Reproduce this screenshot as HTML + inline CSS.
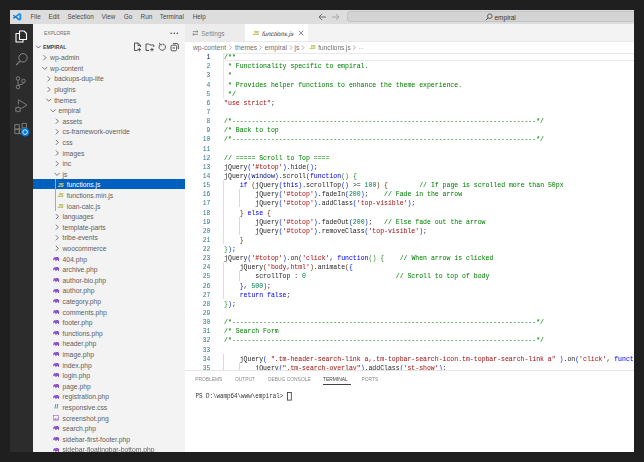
<!DOCTYPE html>
<html><head><meta charset="utf-8"><style>
html,body{margin:0;padding:0;width:644px;height:462px;overflow:hidden;background:#1f1f1f}
.r{position:absolute}
.t{position:absolute;white-space:nowrap}
.m{-webkit-text-stroke:0.03px currentColor}
svg.r{overflow:visible}
</style></head><body>
<div style="position:absolute;left:0;top:0;width:644px;height:462px;clip-path:inset(10px 10px 10px 10px);filter:blur(0.25px)"><div class="r" style="left:10.00px;top:10.00px;width:624.00px;height:442.00px;background:#ffffff;"></div>
<div class="r" style="left:10.00px;top:10.00px;width:624.00px;height:13.80px;background:#dddddd;"></div>
<svg class="r" style="left:13.4px;top:12.7px" width="8.4" height="7.6" viewBox="0 0 100 100" preserveAspectRatio="none">
<defs><linearGradient id="lg" x1="0" x2="1" y1="0" y2="0"><stop offset="0" stop-color="#0a6fc0"/><stop offset="1" stop-color="#2a9cf0"/></linearGradient></defs>
<path fill-rule="evenodd" fill="url(#lg)" d="M96.46 10.8 L75.86 0.87 C73.48 -0.28 70.62 0.2 68.75 2.07 L29.29 38.04 L12.11 25 C10.51 23.79 8.27 23.89 6.78 25.24 L1.27 30.25 C-0.54 31.9 -0.54 34.75 1.27 36.4 L16.17 50 L1.27 63.6 C-0.54 65.25 -0.54 68.1 1.27 69.75 L6.78 74.76 C8.27 76.11 10.51 76.21 12.11 75 L29.29 61.96 L68.75 97.93 C70.62 99.8 73.48 100.28 75.86 99.13 L96.46 89.2 C98.62 88.16 100 85.97 100 83.57 V16.43 C100 14.03 98.62 11.84 96.46 10.8 Z M75.02 27.3 L45.08 50 L75.02 72.7 Z"/>
</svg>
<div class="t" style="left:30.40px;top:12.92px;height:8.96px;line-height:8.96px;font-size:6.4px;font-family:'Liberation Sans', sans-serif;color:#4a4a4a;">File</div>
<div class="t" style="left:48.40px;top:12.92px;height:8.96px;line-height:8.96px;font-size:6.4px;font-family:'Liberation Sans', sans-serif;color:#4a4a4a;">Edit</div>
<div class="t" style="left:67.50px;top:12.92px;height:8.96px;line-height:8.96px;font-size:6.4px;font-family:'Liberation Sans', sans-serif;color:#4a4a4a;">Selection</div>
<div class="t" style="left:101.60px;top:12.92px;height:8.96px;line-height:8.96px;font-size:6.4px;font-family:'Liberation Sans', sans-serif;color:#4a4a4a;">View</div>
<div class="t" style="left:123.70px;top:12.92px;height:8.96px;line-height:8.96px;font-size:6.4px;font-family:'Liberation Sans', sans-serif;color:#4a4a4a;">Go</div>
<div class="t" style="left:140.60px;top:12.92px;height:8.96px;line-height:8.96px;font-size:6.4px;font-family:'Liberation Sans', sans-serif;color:#4a4a4a;">Run</div>
<div class="t" style="left:159.70px;top:12.92px;height:8.96px;line-height:8.96px;font-size:6.4px;font-family:'Liberation Sans', sans-serif;color:#4a4a4a;">Terminal</div>
<div class="t" style="left:192.70px;top:12.92px;height:8.96px;line-height:8.96px;font-size:6.4px;font-family:'Liberation Sans', sans-serif;color:#4a4a4a;">Help</div>
<svg class="r" style="left:318px;top:12.5px" width="22" height="8" viewBox="0 0 22 8">
<path d="M1 4 H8 M1 4 L4 1 M1 4 L4 7" stroke="#555" stroke-width="0.8" fill="none"/>
<path d="M14 4 H21 M21 4 L18 1 M21 4 L18 7" stroke="#9a9a9a" stroke-width="0.8" fill="none"/>
</svg>
<div class="r" style="left:346.70px;top:11.30px;width:300.00px;height:10.60px;background:#d3d3d3;border:0.6px solid #c4c4c4;border-radius:3px;box-sizing:border-box"></div>
<svg class="r" style="left:484.5px;top:13px" width="8" height="8" viewBox="0 0 8 8">
<circle cx="4.8" cy="3.2" r="2.3" stroke="#444" stroke-width="0.8" fill="none"/><path d="M3.2 4.8 L0.8 7.2" stroke="#444" stroke-width="0.9"/>
</svg>
<div class="t" style="left:494.50px;top:12.65px;height:9.10px;line-height:9.10px;font-size:6.5px;font-family:'Liberation Sans', sans-serif;color:#333;">empiral</div>
<div class="r" style="left:10.00px;top:23.80px;width:23.20px;height:428.20px;background:#2c2c2c;"></div>
<svg class="r" style="left:14px;top:29.5px" width="14" height="13" viewBox="0 0 14 13">
<path d="M5.5 1 H10 L12.5 3.5 V9.5 H5.5 Z" stroke="#fff" stroke-width="1.1" fill="none" stroke-linejoin="round"/>
<path d="M5.5 3.5 H2 V12 H9 V9.5" stroke="#fff" stroke-width="1.1" fill="none" stroke-linejoin="round"/>
</svg>
<svg class="r" style="left:14.5px;top:52px" width="13" height="14" viewBox="0 0 13 14">
<circle cx="8" cy="5.8" r="4.2" stroke="#858585" stroke-width="1" fill="none"/>
<path d="M5.2 8.8 L1.2 13" stroke="#858585" stroke-width="1.1"/>
</svg>
<svg class="r" style="left:14px;top:75px" width="13" height="15" viewBox="0 0 13 15">
<circle cx="4" cy="3.5" r="1.8" stroke="#858585" stroke-width="0.9" fill="none"/>
<circle cx="4" cy="12" r="1.8" stroke="#858585" stroke-width="0.9" fill="none"/>
<circle cx="9.5" cy="6" r="1.8" stroke="#858585" stroke-width="0.9" fill="none"/>
<path d="M4 5.3 V10.2 M9.5 7.8 C9.5 10 5 9 4 10.5" stroke="#858585" stroke-width="0.9" fill="none"/>
</svg>
<svg class="r" style="left:14.3px;top:99px" width="14" height="14" viewBox="0 0 14 14">
<path d="M4.4 0.8 L13 6 L7.2 9.6" stroke="#858585" stroke-width="0.9" fill="none" stroke-linejoin="round"/>
<path d="M4.4 0.8 V5.5" stroke="#858585" stroke-width="0.9"/>
<circle cx="4" cy="10.5" r="2.3" stroke="#858585" stroke-width="0.9" fill="none"/>
<path d="M1 8.6 L2.1 9.3 M1 12.4 L2.1 11.7 M7 8.6 L5.9 9.3 M7 12.4 L5.9 11.7 M4 8.2 V7.2" stroke="#858585" stroke-width="0.7"/>
</svg>
<svg class="r" style="left:14px;top:122px" width="17" height="16" viewBox="0 0 17 16">
<path d="M0.8 2.6 H5.3 V7.1 H0.8 Z M0.8 7.1 H5.3 V11.6 H0.8 Z M5.3 7.1 H9.8 V11.6 H5.3 Z M8.1 1.4 H12.5 V5.8 H8.1 Z" stroke="#858585" stroke-width="0.9" fill="none"/>
<circle cx="11.1" cy="10.1" r="4.3" fill="#0078d4"/>
<circle cx="11.1" cy="10.1" r="2.3" stroke="#fff" stroke-width="0.8" fill="none"/>
<path d="M11.1 8.9 V10.2 L12.1 10.9" stroke="#0078d4" stroke-width="0.7" fill="none"/>
</svg>
<div class="r" style="left:33.20px;top:23.80px;width:151.80px;height:428.20px;background:#f3f3f3;"></div>
<div class="t" style="left:43.50px;top:29.78px;height:7.84px;line-height:7.84px;font-size:5.6px;font-family:'Liberation Sans', sans-serif;color:#6f6f6f;transform:scaleX(0.86);transform-origin:0 50%">EXPLORER</div>
<svg class="r" style="left:170px;top:32px" width="9" height="3" viewBox="0 0 9 3"><g fill="#424242"><circle cx="1.2" cy="1.3" r="0.75"/><circle cx="4.3" cy="1.3" r="0.75"/><circle cx="7.4" cy="1.3" r="0.75"/></g></svg>
<svg class="r" style="left:0;top:0" width="644" height="462"><path d="M36.10 45.75 L38.40 48.05 L40.70 45.75" stroke="#555" stroke-width="0.8" fill="none"/></svg>
<div class="t" style="left:43.40px;top:42.54px;height:8.12px;line-height:8.12px;font-size:5.8px;font-family:'Liberation Sans', sans-serif;color:#444;font-weight:bold;transform:scaleX(0.9);transform-origin:0 50%">EMPIRAL</div>
<svg class="r" style="left:132px;top:41.5px" width="50" height="10" viewBox="0 0 50 10">
<g stroke="#424242" stroke-width="0.9" fill="none">
<path d="M5.5 8.5 H2.5 V1 H6.3 L8.6 3.3 V5"/><path d="M6 1.2 V3.6 H8.4"/>
<path d="M7.3 5.8 V9.4 M5.5 7.6 H9.1"/>
<path d="M17.2 8.5 H14 V2 H16.8 L17.8 3 H21.8 V5"/>
<path d="M20 5.8 V9.4 M18.2 7.6 H21.8"/>
<path d="M28.2 2.6 A3.2 3.2 0 1 0 30.8 1.9"/><path d="M27.4 0.8 L28.2 2.8 L30.3 2.7"/>
<rect x="39" y="3.2" width="5.6" height="5.6" rx="1.3"/><path d="M41 1.6 H44.8 A1.6 1.6 0 0 1 46.4 3.2 V7"/><path d="M40.6 6 H43"/>
</g>
</svg>
<div class="r" style="left:33.20px;top:179.00px;width:151.80px;height:10.30px;background:#0060c0;"></div>
<div class="r" style="left:55.20px;top:179.10px;width:0.60px;height:31.80px;background:#a9a9a9;"></div>
<svg class="r" style="left:0;top:0" width="644" height="462"><path d="M43.45 55.10 L45.95 57.60 L43.45 60.10" stroke="#616161" stroke-width="0.85" fill="none"/></svg>
<div class="t" style="left:50.10px;top:53.27px;height:9.45px;line-height:9.45px;font-size:6.75px;font-family:'Liberation Sans', sans-serif;color:#616161;">wp-admin</div>
<svg class="r" style="left:0;top:0" width="644" height="462"><path d="M42.20 66.95 L44.70 69.45 L47.20 66.95" stroke="#616161" stroke-width="0.85" fill="none"/></svg>
<div class="t" style="left:50.10px;top:63.87px;height:9.45px;line-height:9.45px;font-size:6.75px;font-family:'Liberation Sans', sans-serif;color:#616161;">wp-content</div>
<svg class="r" style="left:0;top:0" width="644" height="462"><path d="M47.55 76.30 L50.05 78.80 L47.55 81.30" stroke="#616161" stroke-width="0.85" fill="none"/></svg>
<div class="t" style="left:54.20px;top:74.47px;height:9.45px;line-height:9.45px;font-size:6.75px;font-family:'Liberation Sans', sans-serif;color:#616161;">backups-dup-lite</div>
<svg class="r" style="left:0;top:0" width="644" height="462"><path d="M47.55 86.90 L50.05 89.40 L47.55 91.90" stroke="#616161" stroke-width="0.85" fill="none"/></svg>
<div class="t" style="left:54.20px;top:85.07px;height:9.45px;line-height:9.45px;font-size:6.75px;font-family:'Liberation Sans', sans-serif;color:#616161;">plugins</div>
<svg class="r" style="left:0;top:0" width="644" height="462"><path d="M46.30 98.75 L48.80 101.25 L51.30 98.75" stroke="#616161" stroke-width="0.85" fill="none"/></svg>
<div class="t" style="left:54.20px;top:95.67px;height:9.45px;line-height:9.45px;font-size:6.75px;font-family:'Liberation Sans', sans-serif;color:#616161;">themes</div>
<svg class="r" style="left:0;top:0" width="644" height="462"><path d="M50.50 109.35 L53.00 111.85 L55.50 109.35" stroke="#616161" stroke-width="0.85" fill="none"/></svg>
<div class="t" style="left:58.40px;top:106.27px;height:9.45px;line-height:9.45px;font-size:6.75px;font-family:'Liberation Sans', sans-serif;color:#616161;">empiral</div>
<svg class="r" style="left:0;top:0" width="644" height="462"><path d="M55.85 118.70 L58.35 121.20 L55.85 123.70" stroke="#616161" stroke-width="0.85" fill="none"/></svg>
<div class="t" style="left:62.50px;top:116.88px;height:9.45px;line-height:9.45px;font-size:6.75px;font-family:'Liberation Sans', sans-serif;color:#616161;">assets</div>
<svg class="r" style="left:0;top:0" width="644" height="462"><path d="M55.85 129.30 L58.35 131.80 L55.85 134.30" stroke="#616161" stroke-width="0.85" fill="none"/></svg>
<div class="t" style="left:62.50px;top:127.48px;height:9.45px;line-height:9.45px;font-size:6.75px;font-family:'Liberation Sans', sans-serif;color:#616161;">cs-framework-override</div>
<svg class="r" style="left:0;top:0" width="644" height="462"><path d="M55.85 139.90 L58.35 142.40 L55.85 144.90" stroke="#616161" stroke-width="0.85" fill="none"/></svg>
<div class="t" style="left:62.50px;top:138.08px;height:9.45px;line-height:9.45px;font-size:6.75px;font-family:'Liberation Sans', sans-serif;color:#616161;">css</div>
<svg class="r" style="left:0;top:0" width="644" height="462"><path d="M55.85 150.50 L58.35 153.00 L55.85 155.50" stroke="#616161" stroke-width="0.85" fill="none"/></svg>
<div class="t" style="left:62.50px;top:148.68px;height:9.45px;line-height:9.45px;font-size:6.75px;font-family:'Liberation Sans', sans-serif;color:#616161;">images</div>
<svg class="r" style="left:0;top:0" width="644" height="462"><path d="M55.85 161.10 L58.35 163.60 L55.85 166.10" stroke="#616161" stroke-width="0.85" fill="none"/></svg>
<div class="t" style="left:62.50px;top:159.28px;height:9.45px;line-height:9.45px;font-size:6.75px;font-family:'Liberation Sans', sans-serif;color:#616161;">inc</div>
<svg class="r" style="left:0;top:0" width="644" height="462"><path d="M54.60 172.95 L57.10 175.45 L59.60 172.95" stroke="#616161" stroke-width="0.85" fill="none"/></svg>
<div class="t" style="left:62.50px;top:169.88px;height:9.45px;line-height:9.45px;font-size:6.75px;font-family:'Liberation Sans', sans-serif;color:#616161;">js</div>
<div class="t" style="left:57.40px;top:181.62px;height:7.56px;line-height:7.56px;font-size:5.4px;font-family:'Liberation Sans', sans-serif;color:#dede55;font-weight:bold;font-style:italic;letter-spacing:-0.4px">JS</div>
<div class="t" style="left:66.70px;top:180.47px;height:9.45px;line-height:9.45px;font-size:6.75px;font-family:'Liberation Sans', sans-serif;color:#ffffff;">functions.js</div>
<div class="t" style="left:57.40px;top:192.22px;height:7.56px;line-height:7.56px;font-size:5.4px;font-family:'Liberation Sans', sans-serif;color:#b3b33a;font-weight:bold;font-style:italic;letter-spacing:-0.4px">JS</div>
<div class="t" style="left:66.70px;top:191.08px;height:9.45px;line-height:9.45px;font-size:6.75px;font-family:'Liberation Sans', sans-serif;color:#616161;">functions.min.js</div>
<div class="t" style="left:57.40px;top:202.82px;height:7.56px;line-height:7.56px;font-size:5.4px;font-family:'Liberation Sans', sans-serif;color:#b3b33a;font-weight:bold;font-style:italic;letter-spacing:-0.4px">JS</div>
<div class="t" style="left:66.70px;top:201.68px;height:9.45px;line-height:9.45px;font-size:6.75px;font-family:'Liberation Sans', sans-serif;color:#616161;">loan-calc.js</div>
<svg class="r" style="left:0;top:0" width="644" height="462"><path d="M55.85 214.10 L58.35 216.60 L55.85 219.10" stroke="#616161" stroke-width="0.85" fill="none"/></svg>
<div class="t" style="left:62.50px;top:212.28px;height:9.45px;line-height:9.45px;font-size:6.75px;font-family:'Liberation Sans', sans-serif;color:#616161;">languages</div>
<svg class="r" style="left:0;top:0" width="644" height="462"><path d="M55.85 224.70 L58.35 227.20 L55.85 229.70" stroke="#616161" stroke-width="0.85" fill="none"/></svg>
<div class="t" style="left:62.50px;top:222.88px;height:9.45px;line-height:9.45px;font-size:6.75px;font-family:'Liberation Sans', sans-serif;color:#616161;">template-parts</div>
<svg class="r" style="left:0;top:0" width="644" height="462"><path d="M55.85 235.30 L58.35 237.80 L55.85 240.30" stroke="#616161" stroke-width="0.85" fill="none"/></svg>
<div class="t" style="left:62.50px;top:233.47px;height:9.45px;line-height:9.45px;font-size:6.75px;font-family:'Liberation Sans', sans-serif;color:#616161;">tribe-events</div>
<svg class="r" style="left:0;top:0" width="644" height="462"><path d="M55.85 245.90 L58.35 248.40 L55.85 250.90" stroke="#616161" stroke-width="0.85" fill="none"/></svg>
<div class="t" style="left:62.50px;top:244.08px;height:9.45px;line-height:9.45px;font-size:6.75px;font-family:'Liberation Sans', sans-serif;color:#616161;">woocommerce</div>
<svg class="r" style="left:53.30px;top:256.70px" width="6.4" height="4.3" viewBox="0 0 64 43"><path d="M5 15 C5 5 14 0 26 2 C34 0 48 0 56 4 C62 8 64 14 62 22 L60 41 L51 41 L49 31 L37 31 L35 41 L25 41 L22 29 C15 29 10 26 9 22 L9 33 L2 33 L1 21 Z" fill="#8b54c8"/></svg>
<div class="t" style="left:62.50px;top:254.68px;height:9.45px;line-height:9.45px;font-size:6.75px;font-family:'Liberation Sans', sans-serif;color:#616161;">404.php</div>
<svg class="r" style="left:53.30px;top:267.30px" width="6.4" height="4.3" viewBox="0 0 64 43"><path d="M5 15 C5 5 14 0 26 2 C34 0 48 0 56 4 C62 8 64 14 62 22 L60 41 L51 41 L49 31 L37 31 L35 41 L25 41 L22 29 C15 29 10 26 9 22 L9 33 L2 33 L1 21 Z" fill="#8b54c8"/></svg>
<div class="t" style="left:62.50px;top:265.27px;height:9.45px;line-height:9.45px;font-size:6.75px;font-family:'Liberation Sans', sans-serif;color:#616161;">archive.php</div>
<svg class="r" style="left:53.30px;top:277.90px" width="6.4" height="4.3" viewBox="0 0 64 43"><path d="M5 15 C5 5 14 0 26 2 C34 0 48 0 56 4 C62 8 64 14 62 22 L60 41 L51 41 L49 31 L37 31 L35 41 L25 41 L22 29 C15 29 10 26 9 22 L9 33 L2 33 L1 21 Z" fill="#8b54c8"/></svg>
<div class="t" style="left:62.50px;top:275.88px;height:9.45px;line-height:9.45px;font-size:6.75px;font-family:'Liberation Sans', sans-serif;color:#616161;">author-bio.php</div>
<svg class="r" style="left:53.30px;top:288.50px" width="6.4" height="4.3" viewBox="0 0 64 43"><path d="M5 15 C5 5 14 0 26 2 C34 0 48 0 56 4 C62 8 64 14 62 22 L60 41 L51 41 L49 31 L37 31 L35 41 L25 41 L22 29 C15 29 10 26 9 22 L9 33 L2 33 L1 21 Z" fill="#8b54c8"/></svg>
<div class="t" style="left:62.50px;top:286.47px;height:9.45px;line-height:9.45px;font-size:6.75px;font-family:'Liberation Sans', sans-serif;color:#616161;">author.php</div>
<svg class="r" style="left:53.30px;top:299.10px" width="6.4" height="4.3" viewBox="0 0 64 43"><path d="M5 15 C5 5 14 0 26 2 C34 0 48 0 56 4 C62 8 64 14 62 22 L60 41 L51 41 L49 31 L37 31 L35 41 L25 41 L22 29 C15 29 10 26 9 22 L9 33 L2 33 L1 21 Z" fill="#8b54c8"/></svg>
<div class="t" style="left:62.50px;top:297.07px;height:9.45px;line-height:9.45px;font-size:6.75px;font-family:'Liberation Sans', sans-serif;color:#616161;">category.php</div>
<svg class="r" style="left:53.30px;top:309.70px" width="6.4" height="4.3" viewBox="0 0 64 43"><path d="M5 15 C5 5 14 0 26 2 C34 0 48 0 56 4 C62 8 64 14 62 22 L60 41 L51 41 L49 31 L37 31 L35 41 L25 41 L22 29 C15 29 10 26 9 22 L9 33 L2 33 L1 21 Z" fill="#8b54c8"/></svg>
<div class="t" style="left:62.50px;top:307.68px;height:9.45px;line-height:9.45px;font-size:6.75px;font-family:'Liberation Sans', sans-serif;color:#616161;">comments.php</div>
<svg class="r" style="left:53.30px;top:320.30px" width="6.4" height="4.3" viewBox="0 0 64 43"><path d="M5 15 C5 5 14 0 26 2 C34 0 48 0 56 4 C62 8 64 14 62 22 L60 41 L51 41 L49 31 L37 31 L35 41 L25 41 L22 29 C15 29 10 26 9 22 L9 33 L2 33 L1 21 Z" fill="#8b54c8"/></svg>
<div class="t" style="left:62.50px;top:318.27px;height:9.45px;line-height:9.45px;font-size:6.75px;font-family:'Liberation Sans', sans-serif;color:#616161;">footer.php</div>
<svg class="r" style="left:53.30px;top:330.90px" width="6.4" height="4.3" viewBox="0 0 64 43"><path d="M5 15 C5 5 14 0 26 2 C34 0 48 0 56 4 C62 8 64 14 62 22 L60 41 L51 41 L49 31 L37 31 L35 41 L25 41 L22 29 C15 29 10 26 9 22 L9 33 L2 33 L1 21 Z" fill="#8b54c8"/></svg>
<div class="t" style="left:62.50px;top:328.88px;height:9.45px;line-height:9.45px;font-size:6.75px;font-family:'Liberation Sans', sans-serif;color:#616161;">functions.php</div>
<svg class="r" style="left:53.30px;top:341.50px" width="6.4" height="4.3" viewBox="0 0 64 43"><path d="M5 15 C5 5 14 0 26 2 C34 0 48 0 56 4 C62 8 64 14 62 22 L60 41 L51 41 L49 31 L37 31 L35 41 L25 41 L22 29 C15 29 10 26 9 22 L9 33 L2 33 L1 21 Z" fill="#8b54c8"/></svg>
<div class="t" style="left:62.50px;top:339.48px;height:9.45px;line-height:9.45px;font-size:6.75px;font-family:'Liberation Sans', sans-serif;color:#616161;">header.php</div>
<svg class="r" style="left:53.30px;top:352.10px" width="6.4" height="4.3" viewBox="0 0 64 43"><path d="M5 15 C5 5 14 0 26 2 C34 0 48 0 56 4 C62 8 64 14 62 22 L60 41 L51 41 L49 31 L37 31 L35 41 L25 41 L22 29 C15 29 10 26 9 22 L9 33 L2 33 L1 21 Z" fill="#8b54c8"/></svg>
<div class="t" style="left:62.50px;top:350.07px;height:9.45px;line-height:9.45px;font-size:6.75px;font-family:'Liberation Sans', sans-serif;color:#616161;">image.php</div>
<svg class="r" style="left:53.30px;top:362.70px" width="6.4" height="4.3" viewBox="0 0 64 43"><path d="M5 15 C5 5 14 0 26 2 C34 0 48 0 56 4 C62 8 64 14 62 22 L60 41 L51 41 L49 31 L37 31 L35 41 L25 41 L22 29 C15 29 10 26 9 22 L9 33 L2 33 L1 21 Z" fill="#8b54c8"/></svg>
<div class="t" style="left:62.50px;top:360.68px;height:9.45px;line-height:9.45px;font-size:6.75px;font-family:'Liberation Sans', sans-serif;color:#616161;">index.php</div>
<svg class="r" style="left:53.30px;top:373.30px" width="6.4" height="4.3" viewBox="0 0 64 43"><path d="M5 15 C5 5 14 0 26 2 C34 0 48 0 56 4 C62 8 64 14 62 22 L60 41 L51 41 L49 31 L37 31 L35 41 L25 41 L22 29 C15 29 10 26 9 22 L9 33 L2 33 L1 21 Z" fill="#8b54c8"/></svg>
<div class="t" style="left:62.50px;top:371.27px;height:9.45px;line-height:9.45px;font-size:6.75px;font-family:'Liberation Sans', sans-serif;color:#616161;">login.php</div>
<svg class="r" style="left:53.30px;top:383.90px" width="6.4" height="4.3" viewBox="0 0 64 43"><path d="M5 15 C5 5 14 0 26 2 C34 0 48 0 56 4 C62 8 64 14 62 22 L60 41 L51 41 L49 31 L37 31 L35 41 L25 41 L22 29 C15 29 10 26 9 22 L9 33 L2 33 L1 21 Z" fill="#8b54c8"/></svg>
<div class="t" style="left:62.50px;top:381.88px;height:9.45px;line-height:9.45px;font-size:6.75px;font-family:'Liberation Sans', sans-serif;color:#616161;">page.php</div>
<svg class="r" style="left:53.30px;top:394.50px" width="6.4" height="4.3" viewBox="0 0 64 43"><path d="M5 15 C5 5 14 0 26 2 C34 0 48 0 56 4 C62 8 64 14 62 22 L60 41 L51 41 L49 31 L37 31 L35 41 L25 41 L22 29 C15 29 10 26 9 22 L9 33 L2 33 L1 21 Z" fill="#8b54c8"/></svg>
<div class="t" style="left:62.50px;top:392.48px;height:9.45px;line-height:9.45px;font-size:6.75px;font-family:'Liberation Sans', sans-serif;color:#616161;">registration.php</div>
<svg class="r" style="left:54.10px;top:404.40px" width="5" height="4.5" viewBox="0 0 50 45"><path d="M14 0 H24 L14 45 H4 Z M34 0 H44 L34 45 H24 Z" fill="#4d93bd"/></svg>
<div class="t" style="left:62.50px;top:403.07px;height:9.45px;line-height:9.45px;font-size:6.75px;font-family:'Liberation Sans', sans-serif;color:#616161;">responsive.css</div>
<svg class="r" style="left:53.30px;top:414.80px" width="6" height="6" viewBox="0 0 6 6"><rect x="0.4" y="0.6" width="5.2" height="4.6" stroke="#a074c4" stroke-width="0.7" fill="none"/><path d="M0.6 4.8 L2.5 3 L3.5 4 L4.3 3.3 L5.5 4.6 Z" fill="#a074c4"/></svg>
<div class="t" style="left:62.50px;top:413.68px;height:9.45px;line-height:9.45px;font-size:6.75px;font-family:'Liberation Sans', sans-serif;color:#616161;">screenshot.png</div>
<svg class="r" style="left:53.30px;top:426.30px" width="6.4" height="4.3" viewBox="0 0 64 43"><path d="M5 15 C5 5 14 0 26 2 C34 0 48 0 56 4 C62 8 64 14 62 22 L60 41 L51 41 L49 31 L37 31 L35 41 L25 41 L22 29 C15 29 10 26 9 22 L9 33 L2 33 L1 21 Z" fill="#8b54c8"/></svg>
<div class="t" style="left:62.50px;top:424.27px;height:9.45px;line-height:9.45px;font-size:6.75px;font-family:'Liberation Sans', sans-serif;color:#616161;">search.php</div>
<svg class="r" style="left:53.30px;top:436.90px" width="6.4" height="4.3" viewBox="0 0 64 43"><path d="M5 15 C5 5 14 0 26 2 C34 0 48 0 56 4 C62 8 64 14 62 22 L60 41 L51 41 L49 31 L37 31 L35 41 L25 41 L22 29 C15 29 10 26 9 22 L9 33 L2 33 L1 21 Z" fill="#8b54c8"/></svg>
<div class="t" style="left:62.50px;top:434.88px;height:9.45px;line-height:9.45px;font-size:6.75px;font-family:'Liberation Sans', sans-serif;color:#616161;">sidebar-first-footer.php</div>
<svg class="r" style="left:53.30px;top:447.50px" width="6.4" height="4.3" viewBox="0 0 64 43"><path d="M5 15 C5 5 14 0 26 2 C34 0 48 0 56 4 C62 8 64 14 62 22 L60 41 L51 41 L49 31 L37 31 L35 41 L25 41 L22 29 C15 29 10 26 9 22 L9 33 L2 33 L1 21 Z" fill="#8b54c8"/></svg>
<div class="t" style="left:62.50px;top:445.48px;height:9.45px;line-height:9.45px;font-size:6.75px;font-family:'Liberation Sans', sans-serif;color:#616161;">sidebar-floatingbar-bottom.php</div>
<div class="r" style="left:185.00px;top:23.80px;width:449.00px;height:17.00px;background:#f3f3f3;"></div>
<div class="r" style="left:185.00px;top:23.80px;width:60.20px;height:17.00px;background:#ececec;"></div>
<div class="r" style="left:245.20px;top:23.80px;width:62.60px;height:17.00px;background:#ffffff;"></div>
<svg class="r" style="left:192px;top:30px" width="7" height="6" viewBox="0 0 7 6"><path d="M0.8 1.6 H6 M4.6 0.4 L6 1.6 L4.6 2.8 M6 4.4 H0.8 M2.2 3.2 L0.8 4.4 L2.2 5.6" stroke="#707070" stroke-width="0.7" fill="none"/></svg>
<div class="t" style="left:201.30px;top:29.08px;height:9.03px;line-height:9.03px;font-size:6.45px;font-family:'Liberation Sans', sans-serif;color:#858585;">Settings</div>
<div class="t" style="left:252.80px;top:30.42px;height:7.56px;line-height:7.56px;font-size:5.4px;font-family:'Liberation Sans', sans-serif;color:#b3b33a;font-weight:bold;font-style:italic;letter-spacing:-0.4px">JS</div>
<div class="t" style="left:262.20px;top:29.89px;height:8.82px;line-height:8.82px;font-size:6.3px;font-family:'Liberation Sans', sans-serif;color:#333333;font-style:italic;transform:skewX(-8deg)">functions.js</div>
<svg class="r" style="left:298px;top:30.4px" width="6" height="6" viewBox="0 0 6 6"><path d="M0.7 0.7 L5.3 5.3 M5.3 0.7 L0.7 5.3" stroke="#5a5a5a" stroke-width="0.65"/></svg>
<div class="r" style="left:185.00px;top:40.60px;width:449.00px;height:0.50px;background:#e9e9e9;"></div>
<div class="t" style="left:193.00px;top:42.57px;height:9.45px;line-height:9.45px;font-size:6.75px;font-family:'Liberation Sans', sans-serif;color:#717171;">wp-content</div>
<div class="t" style="left:235.00px;top:42.57px;height:9.45px;line-height:9.45px;font-size:6.75px;font-family:'Liberation Sans', sans-serif;color:#717171;">themes</div>
<div class="t" style="left:264.80px;top:42.57px;height:9.45px;line-height:9.45px;font-size:6.75px;font-family:'Liberation Sans', sans-serif;color:#717171;">empiral</div>
<div class="t" style="left:294.60px;top:42.57px;height:9.45px;line-height:9.45px;font-size:6.75px;font-family:'Liberation Sans', sans-serif;color:#717171;">js</div>
<svg class="r" style="left:0;top:0" width="644" height="462"><path d="M229.40 45.40 L231.60 47.60 L229.40 49.80" stroke="#8a8a8a" stroke-width="0.7" fill="none"/></svg>
<svg class="r" style="left:0;top:0" width="644" height="462"><path d="M259.30 45.40 L261.50 47.60 L259.30 49.80" stroke="#8a8a8a" stroke-width="0.7" fill="none"/></svg>
<svg class="r" style="left:0;top:0" width="644" height="462"><path d="M289.80 45.40 L292.00 47.60 L289.80 49.80" stroke="#8a8a8a" stroke-width="0.7" fill="none"/></svg>
<svg class="r" style="left:0;top:0" width="644" height="462"><path d="M301.70 45.40 L303.90 47.60 L301.70 49.80" stroke="#8a8a8a" stroke-width="0.7" fill="none"/></svg>
<div class="t" style="left:309.50px;top:43.82px;height:7.56px;line-height:7.56px;font-size:5.4px;font-family:'Liberation Sans', sans-serif;color:#b3b33a;font-weight:bold;font-style:italic;letter-spacing:-0.4px">JS</div>
<div class="t" style="left:318.30px;top:42.75px;height:9.10px;line-height:9.10px;font-size:6.5px;font-family:'Liberation Sans', sans-serif;color:#717171;">functions.js</div>
<svg class="r" style="left:0;top:0" width="644" height="462"><path d="M353.10 45.40 L355.30 47.60 L353.10 49.80" stroke="#8a8a8a" stroke-width="0.7" fill="none"/></svg>
<div class="t" style="left:358.60px;top:43.10px;height:8.40px;line-height:8.40px;font-size:6.0px;font-family:'Liberation Sans', sans-serif;color:#717171;">...</div>
<div class="r" style="left:223.30px;top:53.10px;width:420.00px;height:8.00px;background:transparent;border:0.7px solid #eaeaea;box-sizing:border-box"></div>
<div class="r" style="left:223.40px;top:61.17px;width:0.60px;height:36.56px;background:#e6e6e6;"></div>
<div class="r" style="left:223.40px;top:179.99px;width:0.60px;height:63.98px;background:#dedede;"></div>
<div class="r" style="left:239.04px;top:189.13px;width:0.60px;height:18.28px;background:#d9d9d9;"></div>
<div class="r" style="left:239.04px;top:216.55px;width:0.60px;height:18.28px;background:#d9d9d9;"></div>
<div class="r" style="left:223.40px;top:262.25px;width:0.60px;height:36.56px;background:#dedede;"></div>
<div class="r" style="left:239.04px;top:271.39px;width:0.60px;height:9.14px;background:#d9d9d9;"></div>
<div class="r" style="left:223.40px;top:353.65px;width:0.60px;height:18.28px;background:#d9d9d9;"></div>
<div class="r" style="left:239.04px;top:362.79px;width:0.60px;height:9.14px;background:#d9d9d9;"></div>
<div class="r" style="left:185px;top:52px;width:449px;height:317.8px;overflow:hidden">
<div class="t" style="left:0;top:1.13px;width:25.4px;text-align:right;height:9.14px;line-height:9.14px;font-size:6.3px;font-family:'Liberation Mono', monospace;color:#0b216f;transform:scaleY(1.12)">1</div>
<div class="t m" style="left:39.10px;top:1.13px;height:9.14px;line-height:9.14px;font-size:6.517px;font-family:'Liberation Mono', monospace;white-space:pre;transform:scaleY(1.1)"><span style="color:#008000">/**</span></div>
<div class="t" style="left:0;top:10.27px;width:25.4px;text-align:right;height:9.14px;line-height:9.14px;font-size:6.3px;font-family:'Liberation Mono', monospace;color:#237893;transform:scaleY(1.12)">2</div>
<div class="t m" style="left:39.10px;top:10.27px;height:9.14px;line-height:9.14px;font-size:6.517px;font-family:'Liberation Mono', monospace;white-space:pre;transform:scaleY(1.1)"><span style="color:#008000"> * Functionality specific to empiral.</span></div>
<div class="t" style="left:0;top:19.41px;width:25.4px;text-align:right;height:9.14px;line-height:9.14px;font-size:6.3px;font-family:'Liberation Mono', monospace;color:#237893;transform:scaleY(1.12)">3</div>
<div class="t m" style="left:39.10px;top:19.41px;height:9.14px;line-height:9.14px;font-size:6.517px;font-family:'Liberation Mono', monospace;white-space:pre;transform:scaleY(1.1)"><span style="color:#008000"> *</span></div>
<div class="t" style="left:0;top:28.55px;width:25.4px;text-align:right;height:9.14px;line-height:9.14px;font-size:6.3px;font-family:'Liberation Mono', monospace;color:#237893;transform:scaleY(1.12)">4</div>
<div class="t m" style="left:39.10px;top:28.55px;height:9.14px;line-height:9.14px;font-size:6.517px;font-family:'Liberation Mono', monospace;white-space:pre;transform:scaleY(1.1)"><span style="color:#008000"> * Provides helper functions to enhance the theme experience.</span></div>
<div class="t" style="left:0;top:37.69px;width:25.4px;text-align:right;height:9.14px;line-height:9.14px;font-size:6.3px;font-family:'Liberation Mono', monospace;color:#237893;transform:scaleY(1.12)">5</div>
<div class="t m" style="left:39.10px;top:37.69px;height:9.14px;line-height:9.14px;font-size:6.517px;font-family:'Liberation Mono', monospace;white-space:pre;transform:scaleY(1.1)"><span style="color:#008000"> */</span></div>
<div class="t" style="left:0;top:46.83px;width:25.4px;text-align:right;height:9.14px;line-height:9.14px;font-size:6.3px;font-family:'Liberation Mono', monospace;color:#237893;transform:scaleY(1.12)">6</div>
<div class="t m" style="left:39.10px;top:46.83px;height:9.14px;line-height:9.14px;font-size:6.517px;font-family:'Liberation Mono', monospace;white-space:pre;transform:scaleY(1.1)"><span style="color:#a31515">&quot;use strict&quot;</span><span style="color:#2b2b2b">;</span></div>
<div class="t" style="left:0;top:55.97px;width:25.4px;text-align:right;height:9.14px;line-height:9.14px;font-size:6.3px;font-family:'Liberation Mono', monospace;color:#237893;transform:scaleY(1.12)">7</div>
<div class="t m" style="left:39.10px;top:55.97px;height:9.14px;line-height:9.14px;font-size:6.517px;font-family:'Liberation Mono', monospace;white-space:pre;transform:scaleY(1.1)"></div>
<div class="t" style="left:0;top:65.11px;width:25.4px;text-align:right;height:9.14px;line-height:9.14px;font-size:6.3px;font-family:'Liberation Mono', monospace;color:#237893;transform:scaleY(1.12)">8</div>
<div class="t m" style="left:39.10px;top:65.11px;height:9.14px;line-height:9.14px;font-size:6.517px;font-family:'Liberation Mono', monospace;white-space:pre;transform:scaleY(1.1)"><span style="color:#008000">/*------------------------------------------------------------------------------*/</span></div>
<div class="t" style="left:0;top:74.25px;width:25.4px;text-align:right;height:9.14px;line-height:9.14px;font-size:6.3px;font-family:'Liberation Mono', monospace;color:#237893;transform:scaleY(1.12)">9</div>
<div class="t m" style="left:39.10px;top:74.25px;height:9.14px;line-height:9.14px;font-size:6.517px;font-family:'Liberation Mono', monospace;white-space:pre;transform:scaleY(1.1)"><span style="color:#008000">/* Back to top</span></div>
<div class="t" style="left:0;top:83.39px;width:25.4px;text-align:right;height:9.14px;line-height:9.14px;font-size:6.3px;font-family:'Liberation Mono', monospace;color:#237893;transform:scaleY(1.12)">10</div>
<div class="t m" style="left:39.10px;top:83.39px;height:9.14px;line-height:9.14px;font-size:6.517px;font-family:'Liberation Mono', monospace;white-space:pre;transform:scaleY(1.1)"><span style="color:#008000">/*------------------------------------------------------------------------------*/</span></div>
<div class="t" style="left:0;top:92.53px;width:25.4px;text-align:right;height:9.14px;line-height:9.14px;font-size:6.3px;font-family:'Liberation Mono', monospace;color:#237893;transform:scaleY(1.12)">11</div>
<div class="t m" style="left:39.10px;top:92.53px;height:9.14px;line-height:9.14px;font-size:6.517px;font-family:'Liberation Mono', monospace;white-space:pre;transform:scaleY(1.1)"></div>
<div class="t" style="left:0;top:101.67px;width:25.4px;text-align:right;height:9.14px;line-height:9.14px;font-size:6.3px;font-family:'Liberation Mono', monospace;color:#237893;transform:scaleY(1.12)">12</div>
<div class="t m" style="left:39.10px;top:101.67px;height:9.14px;line-height:9.14px;font-size:6.517px;font-family:'Liberation Mono', monospace;white-space:pre;transform:scaleY(1.1)"><span style="color:#008000">// ===== Scroll to Top ====</span></div>
<div class="t" style="left:0;top:110.81px;width:25.4px;text-align:right;height:9.14px;line-height:9.14px;font-size:6.3px;font-family:'Liberation Mono', monospace;color:#237893;transform:scaleY(1.12)">13</div>
<div class="t m" style="left:39.10px;top:110.81px;height:9.14px;line-height:9.14px;font-size:6.517px;font-family:'Liberation Mono', monospace;white-space:pre;transform:scaleY(1.1)"><span style="color:#2b2b2b">jQuery</span><span style="color:#0431fa">(</span><span style="color:#a31515">&#x27;#totop&#x27;</span><span style="color:#0431fa">)</span><span style="color:#2b2b2b">.hide</span><span style="color:#0431fa">()</span><span style="color:#2b2b2b">;</span></div>
<div class="t" style="left:0;top:119.95px;width:25.4px;text-align:right;height:9.14px;line-height:9.14px;font-size:6.3px;font-family:'Liberation Mono', monospace;color:#237893;transform:scaleY(1.12)">14</div>
<div class="t m" style="left:39.10px;top:119.95px;height:9.14px;line-height:9.14px;font-size:6.517px;font-family:'Liberation Mono', monospace;white-space:pre;transform:scaleY(1.1)"><span style="color:#2b2b2b">jQuery</span><span style="color:#0431fa">(</span><span style="color:#001080">window</span><span style="color:#0431fa">)</span><span style="color:#2b2b2b">.scroll</span><span style="color:#0431fa">(</span><span style="color:#0000ff">function</span><span style="color:#319331">()</span><span style="color:#2b2b2b"> </span><span style="color:#319331">{</span></div>
<div class="t" style="left:0;top:129.09px;width:25.4px;text-align:right;height:9.14px;line-height:9.14px;font-size:6.3px;font-family:'Liberation Mono', monospace;color:#237893;transform:scaleY(1.12)">15</div>
<div class="t m" style="left:39.10px;top:129.09px;height:9.14px;line-height:9.14px;font-size:6.517px;font-family:'Liberation Mono', monospace;white-space:pre;transform:scaleY(1.1)"><span style="color:#2b2b2b">    </span><span style="color:#0000ff">if</span><span style="color:#2b2b2b"> </span><span style="color:#7b3814">(</span><span style="color:#2b2b2b">jQuery</span><span style="color:#0431fa">(</span><span style="color:#0000ff">this</span><span style="color:#0431fa">)</span><span style="color:#2b2b2b">.scrollTop</span><span style="color:#0431fa">()</span><span style="color:#2b2b2b"> &gt;= </span><span style="color:#098658">100</span><span style="color:#7b3814">)</span><span style="color:#2b2b2b"> </span><span style="color:#7b3814">{</span><span style="color:#008000">        // If page is scrolled more than 50px</span></div>
<div class="t" style="left:0;top:138.23px;width:25.4px;text-align:right;height:9.14px;line-height:9.14px;font-size:6.3px;font-family:'Liberation Mono', monospace;color:#237893;transform:scaleY(1.12)">16</div>
<div class="t m" style="left:39.10px;top:138.23px;height:9.14px;line-height:9.14px;font-size:6.517px;font-family:'Liberation Mono', monospace;white-space:pre;transform:scaleY(1.1)"><span style="color:#2b2b2b">        jQuery</span><span style="color:#0431fa">(</span><span style="color:#a31515">&#x27;#totop&#x27;</span><span style="color:#0431fa">)</span><span style="color:#2b2b2b">.fadeIn</span><span style="color:#0431fa">(</span><span style="color:#098658">200</span><span style="color:#0431fa">)</span><span style="color:#2b2b2b">;</span><span style="color:#008000">    // Fade in the arrow</span></div>
<div class="t" style="left:0;top:147.37px;width:25.4px;text-align:right;height:9.14px;line-height:9.14px;font-size:6.3px;font-family:'Liberation Mono', monospace;color:#237893;transform:scaleY(1.12)">17</div>
<div class="t m" style="left:39.10px;top:147.37px;height:9.14px;line-height:9.14px;font-size:6.517px;font-family:'Liberation Mono', monospace;white-space:pre;transform:scaleY(1.1)"><span style="color:#2b2b2b">        jQuery</span><span style="color:#0431fa">(</span><span style="color:#a31515">&#x27;#totop&#x27;</span><span style="color:#0431fa">)</span><span style="color:#2b2b2b">.addClass</span><span style="color:#0431fa">(</span><span style="color:#a31515">&#x27;top-visible&#x27;</span><span style="color:#0431fa">)</span><span style="color:#2b2b2b">;</span></div>
<div class="t" style="left:0;top:156.51px;width:25.4px;text-align:right;height:9.14px;line-height:9.14px;font-size:6.3px;font-family:'Liberation Mono', monospace;color:#237893;transform:scaleY(1.12)">18</div>
<div class="t m" style="left:39.10px;top:156.51px;height:9.14px;line-height:9.14px;font-size:6.517px;font-family:'Liberation Mono', monospace;white-space:pre;transform:scaleY(1.1)"><span style="color:#2b2b2b">    </span><span style="color:#7b3814">}</span><span style="color:#2b2b2b"> </span><span style="color:#0000ff">else</span><span style="color:#2b2b2b"> </span><span style="color:#7b3814">{</span></div>
<div class="t" style="left:0;top:165.65px;width:25.4px;text-align:right;height:9.14px;line-height:9.14px;font-size:6.3px;font-family:'Liberation Mono', monospace;color:#237893;transform:scaleY(1.12)">19</div>
<div class="t m" style="left:39.10px;top:165.65px;height:9.14px;line-height:9.14px;font-size:6.517px;font-family:'Liberation Mono', monospace;white-space:pre;transform:scaleY(1.1)"><span style="color:#2b2b2b">        jQuery</span><span style="color:#0431fa">(</span><span style="color:#a31515">&#x27;#totop&#x27;</span><span style="color:#0431fa">)</span><span style="color:#2b2b2b">.fadeOut</span><span style="color:#0431fa">(</span><span style="color:#098658">200</span><span style="color:#0431fa">)</span><span style="color:#2b2b2b">;</span><span style="color:#008000">   // Else fade out the arrow</span></div>
<div class="t" style="left:0;top:174.79px;width:25.4px;text-align:right;height:9.14px;line-height:9.14px;font-size:6.3px;font-family:'Liberation Mono', monospace;color:#237893;transform:scaleY(1.12)">20</div>
<div class="t m" style="left:39.10px;top:174.79px;height:9.14px;line-height:9.14px;font-size:6.517px;font-family:'Liberation Mono', monospace;white-space:pre;transform:scaleY(1.1)"><span style="color:#2b2b2b">        jQuery</span><span style="color:#0431fa">(</span><span style="color:#a31515">&#x27;#totop&#x27;</span><span style="color:#0431fa">)</span><span style="color:#2b2b2b">.removeClass</span><span style="color:#0431fa">(</span><span style="color:#a31515">&#x27;top-visible&#x27;</span><span style="color:#0431fa">)</span><span style="color:#2b2b2b">;</span></div>
<div class="t" style="left:0;top:183.93px;width:25.4px;text-align:right;height:9.14px;line-height:9.14px;font-size:6.3px;font-family:'Liberation Mono', monospace;color:#237893;transform:scaleY(1.12)">21</div>
<div class="t m" style="left:39.10px;top:183.93px;height:9.14px;line-height:9.14px;font-size:6.517px;font-family:'Liberation Mono', monospace;white-space:pre;transform:scaleY(1.1)"><span style="color:#2b2b2b">    </span><span style="color:#7b3814">}</span></div>
<div class="t" style="left:0;top:193.07px;width:25.4px;text-align:right;height:9.14px;line-height:9.14px;font-size:6.3px;font-family:'Liberation Mono', monospace;color:#237893;transform:scaleY(1.12)">22</div>
<div class="t m" style="left:39.10px;top:193.07px;height:9.14px;line-height:9.14px;font-size:6.517px;font-family:'Liberation Mono', monospace;white-space:pre;transform:scaleY(1.1)"><span style="color:#319331">}</span><span style="color:#0431fa">)</span><span style="color:#2b2b2b">;</span></div>
<div class="t" style="left:0;top:202.21px;width:25.4px;text-align:right;height:9.14px;line-height:9.14px;font-size:6.3px;font-family:'Liberation Mono', monospace;color:#237893;transform:scaleY(1.12)">23</div>
<div class="t m" style="left:39.10px;top:202.21px;height:9.14px;line-height:9.14px;font-size:6.517px;font-family:'Liberation Mono', monospace;white-space:pre;transform:scaleY(1.1)"><span style="color:#2b2b2b">jQuery</span><span style="color:#0431fa">(</span><span style="color:#a31515">&#x27;#totop&#x27;</span><span style="color:#0431fa">)</span><span style="color:#2b2b2b">.on</span><span style="color:#0431fa">(</span><span style="color:#a31515">&#x27;click&#x27;</span><span style="color:#2b2b2b">, </span><span style="color:#0000ff">function</span><span style="color:#319331">()</span><span style="color:#2b2b2b"> </span><span style="color:#319331">{</span><span style="color:#008000">    // When arrow is clicked</span></div>
<div class="t" style="left:0;top:211.35px;width:25.4px;text-align:right;height:9.14px;line-height:9.14px;font-size:6.3px;font-family:'Liberation Mono', monospace;color:#237893;transform:scaleY(1.12)">24</div>
<div class="t m" style="left:39.10px;top:211.35px;height:9.14px;line-height:9.14px;font-size:6.517px;font-family:'Liberation Mono', monospace;white-space:pre;transform:scaleY(1.1)"><span style="color:#2b2b2b">    jQuery</span><span style="color:#7b3814">(</span><span style="color:#a31515">&#x27;body,html&#x27;</span><span style="color:#7b3814">)</span><span style="color:#2b2b2b">.animate</span><span style="color:#7b3814">(</span><span style="color:#0431fa">{</span></div>
<div class="t" style="left:0;top:220.49px;width:25.4px;text-align:right;height:9.14px;line-height:9.14px;font-size:6.3px;font-family:'Liberation Mono', monospace;color:#237893;transform:scaleY(1.12)">25</div>
<div class="t m" style="left:39.10px;top:220.49px;height:9.14px;line-height:9.14px;font-size:6.517px;font-family:'Liberation Mono', monospace;white-space:pre;transform:scaleY(1.1)"><span style="color:#2b2b2b">        scrollTop : </span><span style="color:#098658">0</span><span style="color:#008000">                       // Scroll to top of body</span></div>
<div class="t" style="left:0;top:229.63px;width:25.4px;text-align:right;height:9.14px;line-height:9.14px;font-size:6.3px;font-family:'Liberation Mono', monospace;color:#237893;transform:scaleY(1.12)">26</div>
<div class="t m" style="left:39.10px;top:229.63px;height:9.14px;line-height:9.14px;font-size:6.517px;font-family:'Liberation Mono', monospace;white-space:pre;transform:scaleY(1.1)"><span style="color:#2b2b2b">    </span><span style="color:#0431fa">}</span><span style="color:#2b2b2b">, </span><span style="color:#098658">500</span><span style="color:#7b3814">)</span><span style="color:#2b2b2b">;</span></div>
<div class="t" style="left:0;top:238.77px;width:25.4px;text-align:right;height:9.14px;line-height:9.14px;font-size:6.3px;font-family:'Liberation Mono', monospace;color:#237893;transform:scaleY(1.12)">27</div>
<div class="t m" style="left:39.10px;top:238.77px;height:9.14px;line-height:9.14px;font-size:6.517px;font-family:'Liberation Mono', monospace;white-space:pre;transform:scaleY(1.1)"><span style="color:#2b2b2b">    </span><span style="color:#0000ff">return</span><span style="color:#2b2b2b"> </span><span style="color:#0000ff">false</span><span style="color:#2b2b2b">;</span></div>
<div class="t" style="left:0;top:247.91px;width:25.4px;text-align:right;height:9.14px;line-height:9.14px;font-size:6.3px;font-family:'Liberation Mono', monospace;color:#237893;transform:scaleY(1.12)">28</div>
<div class="t m" style="left:39.10px;top:247.91px;height:9.14px;line-height:9.14px;font-size:6.517px;font-family:'Liberation Mono', monospace;white-space:pre;transform:scaleY(1.1)"><span style="color:#319331">}</span><span style="color:#0431fa">)</span><span style="color:#2b2b2b">;</span></div>
<div class="t" style="left:0;top:257.05px;width:25.4px;text-align:right;height:9.14px;line-height:9.14px;font-size:6.3px;font-family:'Liberation Mono', monospace;color:#237893;transform:scaleY(1.12)">29</div>
<div class="t m" style="left:39.10px;top:257.05px;height:9.14px;line-height:9.14px;font-size:6.517px;font-family:'Liberation Mono', monospace;white-space:pre;transform:scaleY(1.1)"></div>
<div class="t" style="left:0;top:266.19px;width:25.4px;text-align:right;height:9.14px;line-height:9.14px;font-size:6.3px;font-family:'Liberation Mono', monospace;color:#237893;transform:scaleY(1.12)">30</div>
<div class="t m" style="left:39.10px;top:266.19px;height:9.14px;line-height:9.14px;font-size:6.517px;font-family:'Liberation Mono', monospace;white-space:pre;transform:scaleY(1.1)"><span style="color:#008000">/*------------------------------------------------------------------------------*/</span></div>
<div class="t" style="left:0;top:275.33px;width:25.4px;text-align:right;height:9.14px;line-height:9.14px;font-size:6.3px;font-family:'Liberation Mono', monospace;color:#237893;transform:scaleY(1.12)">31</div>
<div class="t m" style="left:39.10px;top:275.33px;height:9.14px;line-height:9.14px;font-size:6.517px;font-family:'Liberation Mono', monospace;white-space:pre;transform:scaleY(1.1)"><span style="color:#008000">/* Search Form</span></div>
<div class="t" style="left:0;top:284.47px;width:25.4px;text-align:right;height:9.14px;line-height:9.14px;font-size:6.3px;font-family:'Liberation Mono', monospace;color:#237893;transform:scaleY(1.12)">32</div>
<div class="t m" style="left:39.10px;top:284.47px;height:9.14px;line-height:9.14px;font-size:6.517px;font-family:'Liberation Mono', monospace;white-space:pre;transform:scaleY(1.1)"><span style="color:#008000">/*------------------------------------------------------------------------------*/</span></div>
<div class="t" style="left:0;top:293.61px;width:25.4px;text-align:right;height:9.14px;line-height:9.14px;font-size:6.3px;font-family:'Liberation Mono', monospace;color:#237893;transform:scaleY(1.12)">33</div>
<div class="t m" style="left:39.10px;top:293.61px;height:9.14px;line-height:9.14px;font-size:6.517px;font-family:'Liberation Mono', monospace;white-space:pre;transform:scaleY(1.1)"></div>
<div class="t" style="left:0;top:302.75px;width:25.4px;text-align:right;height:9.14px;line-height:9.14px;font-size:6.3px;font-family:'Liberation Mono', monospace;color:#237893;transform:scaleY(1.12)">34</div>
<div class="t m" style="left:39.10px;top:302.75px;height:9.14px;line-height:9.14px;font-size:6.517px;font-family:'Liberation Mono', monospace;white-space:pre;transform:scaleY(1.1)"><span style="color:#2b2b2b">    jQuery</span><span style="color:#0431fa">(</span><span style="color:#2b2b2b"> </span><span style="color:#a31515">&quot;.tm-header-search-link a,.tm-topbar-search-icon.tm-topbar-search-link a&quot;</span><span style="color:#2b2b2b"> </span><span style="color:#0431fa">)</span><span style="color:#2b2b2b">.on</span><span style="color:#0431fa">(</span><span style="color:#a31515">&#x27;click&#x27;</span><span style="color:#2b2b2b">, </span><span style="color:#0000ff">function</span><span style="color:#319331">()</span><span style="color:#2b2b2b"> </span><span style="color:#319331">{</span></div>
<div class="t" style="left:0;top:311.89px;width:25.4px;text-align:right;height:9.14px;line-height:9.14px;font-size:6.3px;font-family:'Liberation Mono', monospace;color:#237893;transform:scaleY(1.12)">35</div>
<div class="t m" style="left:39.10px;top:311.89px;height:9.14px;line-height:9.14px;font-size:6.517px;font-family:'Liberation Mono', monospace;white-space:pre;transform:scaleY(1.1)"><span style="color:#2b2b2b">        jQuery</span><span style="color:#0431fa">(</span><span style="color:#a31515">&quot;.tm-search-overlay&quot;</span><span style="color:#0431fa">)</span><span style="color:#2b2b2b">.addClass</span><span style="color:#0431fa">(</span><span style="color:#a31515">&#x27;st-show&#x27;</span><span style="color:#0431fa">)</span><span style="color:#2b2b2b">;</span></div>
</div>
<div class="r" style="left:185.00px;top:369.80px;width:449.00px;height:82.20px;background:#ffffff;"></div>
<div class="r" style="left:185.00px;top:369.60px;width:449.00px;height:0.70px;background:#e5e5e5;"></div>
<div class="t" style="left:195.20px;top:376.57px;height:6.86px;line-height:6.86px;font-size:4.9px;font-family:'Liberation Sans', sans-serif;color:#8a8a8a;">PROBLEMS</div>
<div class="t" style="left:235.00px;top:376.57px;height:6.86px;line-height:6.86px;font-size:4.9px;font-family:'Liberation Sans', sans-serif;color:#8a8a8a;">OUTPUT</div>
<div class="t" style="left:268.00px;top:376.57px;height:6.86px;line-height:6.86px;font-size:4.9px;font-family:'Liberation Sans', sans-serif;color:#8a8a8a;">DEBUG CONSOLE</div>
<div class="t" style="left:323.00px;top:376.57px;height:6.86px;line-height:6.86px;font-size:4.9px;font-family:'Liberation Sans', sans-serif;color:#424242;">TERMINAL</div>
<div class="t" style="left:361.50px;top:376.57px;height:6.86px;line-height:6.86px;font-size:4.9px;font-family:'Liberation Sans', sans-serif;color:#8a8a8a;">PORTS</div>
<div class="r" style="left:322.50px;top:383.60px;width:28.00px;height:0.80px;background:#424242;"></div>
<div class="t" style="left:195.40px;top:392.89px;height:8.22px;line-height:8.22px;font-size:5.87px;font-family:'Liberation Mono', monospace;color:#333;white-space:pre;transform:scaleY(1.15)">PS D:\wamp64\www\empiral&gt; </div>
<svg class="r" style="left:287px;top:391.5px" width="5" height="9" viewBox="0 0 5 9"><rect x="0.5" y="0.5" width="3.8" height="7.6" stroke="#333" stroke-width="0.8" fill="none"/></svg></div>
</body></html>
